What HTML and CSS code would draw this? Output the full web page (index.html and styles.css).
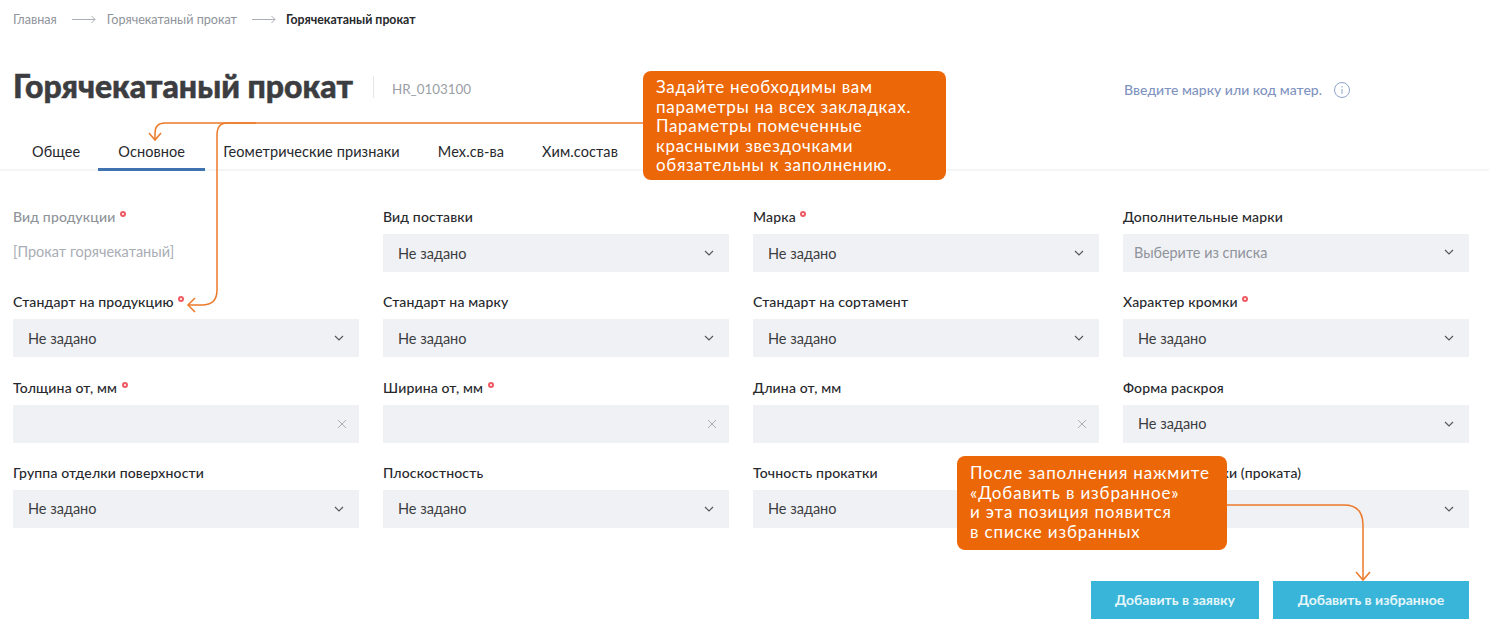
FILE: index.html
```html
<!DOCTYPE html>
<html lang="ru">
<head>
    <meta charset="UTF-8">
    <meta name="viewport" content="width=device-width, initial-scale=1.0">
    <title>Горячекатаный прокат</title>
    <link rel="stylesheet" href="styles.css">
</head>
<body>
    <nav class="crumbs">
        <a class="crumb">Главная</a>
        <svg class="crumb-arrow" width="24" height="10" viewBox="0 0 24 10"><path d="M0 5.500h23M19.500 2l3.500 3.500-3.500 3.500" fill="none" stroke="#a9adb5"/></svg>
        <a class="crumb">Горячекатаный прокат</a>
        <svg class="crumb-arrow" width="24" height="10" viewBox="0 0 24 10"><path d="M0 5.500h23M19.500 2l3.500 3.500-3.500 3.500" fill="none" stroke="#a9adb5"/></svg>
        <span class="crumb crumb-current">Горячекатаный прокат</span>
    </nav>

    <header class="head">
        <h1>Горячекатаный прокат</h1>
        <span class="code">HR_0103100</span>
        <a class="search-hint">Введите марку или код матер.</a>
        <svg class="info" width="18" height="18" viewBox="0 0 18 18"><circle cx="9" cy="9" r="7.500" fill="none" stroke="#8fa3c9"/><path d="M9 8v5M9 5v1.500" stroke="#8fa3c9" fill="none"/></svg>
    </header>

    <div class="tabs">
        <a class="tab">Общее</a>
        <a class="tab tab-active">Основное</a>
        <a class="tab">Геометрические признаки</a>
        <a class="tab">Мех.св-ва</a>
        <a class="tab">Хим.состав</a>
    </div>

    <form class="params">
        <div class="field">
            <label class="muted">Вид продукции <i class="req"></i></label>
            <div class="static">[Прокат горячекатаный]</div>
        </div>
        <div class="field">
            <label>Вид поставки</label>
            <div class="control">Не задано<svg class="chev" viewBox="0 0 10 6"><path d="M1 1l4 4 4-4"/></svg></div>
        </div>
        <div class="field">
            <label>Марка <i class="req"></i></label>
            <div class="control">Не задано<svg class="chev" viewBox="0 0 10 6"><path d="M1 1l4 4 4-4"/></svg></div>
        </div>
        <div class="field">
            <label>Дополнительные марки</label>
            <div class="control control-hint">Выберите из списка<svg class="chev" viewBox="0 0 10 6"><path d="M1 1l4 4 4-4"/></svg></div>
        </div>

        <div class="field">
            <label>Стандарт на продукцию <i class="req"></i></label>
            <div class="control">Не задано<svg class="chev" viewBox="0 0 10 6"><path d="M1 1l4 4 4-4"/></svg></div>
        </div>
        <div class="field">
            <label>Стандарт на марку</label>
            <div class="control">Не задано<svg class="chev" viewBox="0 0 10 6"><path d="M1 1l4 4 4-4"/></svg></div>
        </div>
        <div class="field">
            <label>Стандарт на сортамент</label>
            <div class="control">Не задано<svg class="chev" viewBox="0 0 10 6"><path d="M1 1l4 4 4-4"/></svg></div>
        </div>
        <div class="field">
            <label>Характер кромки <i class="req"></i></label>
            <div class="control">Не задано<svg class="chev" viewBox="0 0 10 6"><path d="M1 1l4 4 4-4"/></svg></div>
        </div>

        <div class="field">
            <label>Толщина от, мм <i class="req"></i></label>
            <div class="control control-input"><svg class="clear" viewBox="0 0 10 10"><path d="M1 1l8 8M9 1l-8 8"/></svg></div>
        </div>
        <div class="field">
            <label>Ширина от, мм <i class="req"></i></label>
            <div class="control control-input"><svg class="clear" viewBox="0 0 10 10"><path d="M1 1l8 8M9 1l-8 8"/></svg></div>
        </div>
        <div class="field">
            <label>Длина от, мм</label>
            <div class="control control-input"><svg class="clear" viewBox="0 0 10 10"><path d="M1 1l8 8M9 1l-8 8"/></svg></div>
        </div>
        <div class="field">
            <label>Форма раскроя</label>
            <div class="control">Не задано<svg class="chev" viewBox="0 0 10 6"><path d="M1 1l4 4 4-4"/></svg></div>
        </div>

        <div class="field">
            <label>Группа отделки поверхности</label>
            <div class="control">Не задано<svg class="chev" viewBox="0 0 10 6"><path d="M1 1l4 4 4-4"/></svg></div>
        </div>
        <div class="field">
            <label>Плоскостность</label>
            <div class="control">Не задано<svg class="chev" viewBox="0 0 10 6"><path d="M1 1l4 4 4-4"/></svg></div>
        </div>
        <div class="field">
            <label>Точность прокатки</label>
            <div class="control">Не задано<svg class="chev" viewBox="0 0 10 6"><path d="M1 1l4 4 4-4"/></svg></div>
        </div>
        <div class="field">
            <label>Способ прокатки (проката)</label>
            <div class="control"><svg class="chev" viewBox="0 0 10 6"><path d="M1 1l4 4 4-4"/></svg></div>
        </div>
    </form>

    <div class="actions">
        <button class="btn btn-request" type="button">Добавить в заявку</button>
        <button class="btn btn-fav" type="button">Добавить в избранное</button>
    </div>

    <!-- стрелки подсказок -->
    <svg class="guides" width="1489" height="638" viewBox="0 0 1489 638">
        <g fill="none" stroke="#ec7a2a" stroke-width="1.500">
            <path d="M645 123H165q-10 0-10 10v7"/>
            <path d="M149 133l6 7 6-7"/>
            <path d="M256 123h-29q-10 0-10 12v155q0 15-15 15h-14"/>
            <path d="M195 298l-7 7 7 7"/>
            <path d="M1225 505h119q19 0 19 20v55"/>
            <path d="M1356 572l7 8 7-8"/>
        </g>
    </svg>

    <div class="note note-top">Задайте необходимы вам<br>параметры на всех закладках.<br>Параметры помеченные<br>красными звездочками<br>обязательны к заполнению.</div>
    <div class="note note-bottom">После заполнения нажмите<br>«Добавить в избранное»<br>и эта позиция появится<br>в списке избранных</div>
</body>
</html>
```

FILE: styles.css
```css
body {
    margin: 0;
    height: 638px;
    overflow: hidden;
    position: relative;
    font-family: Lato, "Noto Sans", sans-serif;
    color: #26282c;
    background: #fff;
}
.crumbs {
    display: flex;
    align-items: center;
    height: 12px;
    padding: 13px 0 0 13px;
    font-size: 12.600px;
}
.crumb { color: #8f939a; }
.crumb-current { color: #26282c; font-weight: 700; font-size: 12.300px; }
.crumb-arrow { margin: 0 11px 0 15px; }
.crumb-arrow + .crumb-current { margin-left: -1px; }
.head {
    display: flex;
    align-items: center;
    height: 40px;
    margin-top: 40px;
    padding: 0 138px 0 13px;
}
h1 {
    margin: 0;
    font-size: 32px;
    font-weight: 900;
    color: #3c3d40;
    padding-right: 20px;
    -webkit-text-stroke: 0.5px #3c3d40;
}
.code {
    color: #9a9ea5;
    font-size: 13.400px;
    padding-left: 18px;
    border-left: 1px solid #e6e7ea;
    height: 22px;
    line-height: 26px;
    margin-top: 4px;
}
.search-hint {
    margin-left: auto;
    margin-right: 11px;
    margin-top: 9px;
    color: #7f94bf;
    font-size: 14px;
    font-weight: 500;
}
.info { flex: none; margin-top: 9px; }
.tabs {
    display: flex;
    height: 37px;
    margin-top: 27px;
    padding-left: 13px;
    border-bottom: 2px solid #f4f5f7;
}
.tab {
    padding: 11px 19px 0;
    font-size: 14.500px;
    letter-spacing: 0.1px;
    color: #26282c;
    margin-bottom: -2px;
}
.tab-active {
    padding: 11px 20px 0;
    margin: 0 -1px -2px;
    border-bottom: 3px solid #3f72af;
}
.params {
    display: grid;
    grid-template-columns: repeat(4, 346px);
    column-gap: 24px;
    row-gap: 18.330px;
    padding: 34px 0 0 13px;
}
.field label {
    display: block;
    height: 29px;
    line-height: 24px;
    font-size: 14px;
    font-weight: 500;
    letter-spacing: 0.15px;
}
.field .muted { color: #8f939a; }
.req {
    display: inline-block;
    width: 6px;
    height: 6px;
    margin: 0 0 9px 1px;
    vertical-align: middle;
    border-radius: 50%;
    border: 2px solid #ef5a64;
    box-sizing: border-box;
}
.static {
    height: 38px;
    line-height: 36px;
    font-size: 14.500px;
    color: #a9adb5;
}
.control {
    display: flex;
    align-items: center;
    box-sizing: border-box;
    height: 38px;
    padding: 0 15px;
    background: #f0f1f5;
    font-size: 14.500px;
    color: #3c3d40;
}
.control-hint { color: #8f939a; padding-left: 11px; font-size: 14.400px; padding-bottom: 2px; }
.control-input { padding-right: 12px; }
.chev {
    width: 10px;
    height: 6px;
    margin-left: auto;
    fill: none;
    stroke: #55585e;
    stroke-width: 1.200;
}
.clear {
    width: 10px;
    height: 10px;
    margin-left: auto;
    fill: none;
    stroke: #a9adb5;
}
.actions {
    display: flex;
    justify-content: flex-end;
    gap: 14px;
    padding-right: 20px;
    margin-top: 53px;
}
.btn {
    height: 38px;
    border: 0;
    background: #38b5d8;
    color: #e6f6fa;
    font-family: inherit;
    font-size: 14px;
    font-weight: 700;
    padding: 0;
}
.btn-request { width: 168px; }
.btn-fav { width: 196px; }
.guides {
    position: absolute;
    left: 0;
    top: 0;
    pointer-events: none;
}
.note {
    position: absolute;
    background: #ec6708;
    color: #fff;
    border-radius: 8px;
    box-sizing: border-box;
    font-size: 17px;
    line-height: 19.500px;
}
.note-top {
    left: 643px;
    top: 71px;
    width: 303px;
    height: 109px;
    padding: 6px 0 0 13px;
    letter-spacing: 0.7px;
}
.note-bottom {
    left: 957px;
    top: 456px;
    width: 270px;
    height: 94px;
    padding: 7px 0 0 13px;
    letter-spacing: 0.85px;
}
```
